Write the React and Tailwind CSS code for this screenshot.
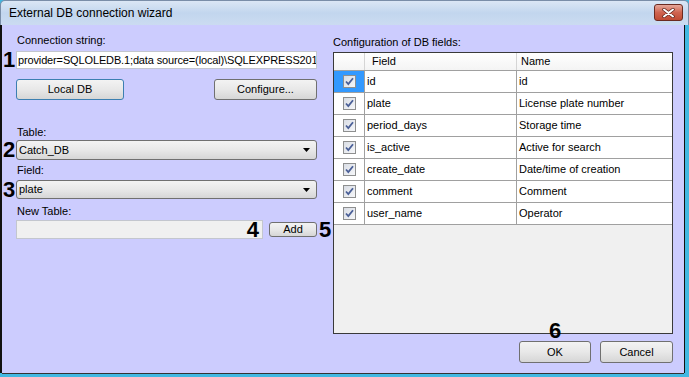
import React from 'react';

const fields = [
  { field: 'id', name: 'id' },
  { field: 'plate', name: 'License plate number' },
  { field: 'period_days', name: 'Storage time' },
  { field: 'is_active', name: 'Active for search' },
  { field: 'create_date', name: 'Date/time of creation' },
  { field: 'comment', name: 'Comment' },
  { field: 'user_name', name: 'Operator' },
];

function Num({ children, className = '' }) {
  return (
    <span className={`font-bold text-[22px] leading-[18px] text-black ${className}`}>{children}</span>
  );
}

function Check() {
  return (
    <svg width="13" height="13" viewBox="0 0 13 13">
      <defs>
        <linearGradient id="cb" x1="0" y1="0" x2="1" y2="1">
          <stop offset="0" stopColor="#d8dce4" />
          <stop offset="1" stopColor="#f7f8fa" />
        </linearGradient>
      </defs>
      <rect x="0.5" y="0.5" width="12" height="12" fill="url(#cb)" stroke="#8e8f8f" />
      <path d="M3 6.5 L5.3 9 L10 3.2" fill="none" stroke="#4a5f97" strokeWidth="1.8" />
    </svg>
  );
}

function Arrow() {
  return (
    <svg width="7" height="4" viewBox="0 0 7 4">
      <path d="M0 0 H7 L3.5 4 Z" fill="#000" />
    </svg>
  );
}

const btn =
  'flex items-center justify-center rounded-[3px] border bg-gradient-to-b from-[#f3f3f3] via-[#e8e8e8] to-[#d6d6d6] text-[11px] text-black';

export default function App() {
  return (
    <div className="w-[689px] h-[377px] flex flex-col bg-[#41b8e2] font-['Liberation_Sans',Arial,sans-serif] overflow-hidden">
      {/* title bar */}
      <div className="h-[25px] flex items-center justify-between pl-[8px] pr-[5px] rounded-t-[5px] border border-b-0 border-[#7a8ea8] bg-gradient-to-b from-[#dbe7f5] via-[#c2d6ee] to-[#cbdbf1]">
        <span className="text-[12px] text-black">External DB connection wizard</span>
        <div className="w-[29px] h-[17px] mb-[1px] rounded-[3px] border border-[#6b2a20] bg-gradient-to-b from-[#e6a79a] via-[#cf6450] to-[#c04a33] flex items-center justify-center">
          <svg width="13" height="10" viewBox="0 0 13 10">
            <path d="M2 1.5 L11 8.5 M11 1.5 L2 8.5" stroke="#5a2018" strokeWidth="3.4" strokeLinecap="round" />
            <path d="M2 1.5 L11 8.5 M11 1.5 L2 8.5" stroke="#fff" strokeWidth="2" strokeLinecap="round" />
          </svg>
        </div>
      </div>

      <div className="flex-1 flex min-h-0">
        <div className="w-[2px] bg-[#111]" />
        <div className="flex-1 flex bg-[#ccccfe]">
          {/* left column */}
          <div className="w-[331px] flex flex-col pt-[9px] pl-px">
            <div className="ml-[14px] text-[11px] leading-[12px]">Connection string:</div>
            <div className="mt-[5px] flex items-center">
              <Num className="w-[13px]">1</Num>
              <div className="w-[301px] h-[18px] bg-white border border-[#c3c6ce] pl-[1px] text-[11px] leading-[16px] tracking-[-0.14px] whitespace-nowrap overflow-hidden">
                provider=SQLOLEDB.1;data source=(local)\SQLEXPRESS201
              </div>
            </div>
            <div className="mt-[10px] ml-[13px] w-[301px] flex justify-between">
              <div className={`${btn} w-[108px] h-[21px] border-[#3c7fb1]`}>Local DB</div>
              <div className={`${btn} w-[103px] h-[21px] border-[#707070]`}>Configure...</div>
            </div>

            <div className="mt-[26px] ml-[14px] text-[11px] leading-[12px]">Table:</div>
            <div className="mt-[2px] flex items-center">
              <Num className="w-[13px]">2</Num>
              <div className={`${btn} w-[301px] h-[20px] border-[#707070] !justify-between pl-[2px] pr-[6px]`}>
                <span>Catch_DB</span>
                <Arrow />
              </div>
            </div>

            <div className="mt-[4px] ml-[14px] text-[11px] leading-[12px]">Field:</div>
            <div className="mt-[4px] flex items-center">
              <Num className="w-[13px]">3</Num>
              <div className={`${btn} w-[301px] h-[19px] border-[#707070] !justify-between pl-[2px] pr-[6px]`}>
                <span>plate</span>
                <Arrow />
              </div>
            </div>

            <div className="mt-[6px] ml-[14px] text-[11px] leading-[12px]">New Table:</div>
            <div className="mt-[3px] ml-[13px] flex items-center">
              <div className="w-[247px] h-[19px] bg-[#f0f0f0] border border-[#c3c6ce] flex items-center justify-end pr-[3px]">
                <Num>4</Num>
              </div>
              <div className={`${btn} ml-[6px] w-[48px] h-[15px] border-[#707070]`}>Add</div>
              <Num className="ml-[2px]">5</Num>
            </div>
          </div>

          {/* right column */}
          <div className="w-[340px] flex flex-col pt-[11px]">
            <div className="text-[11px] leading-[12px]">Configuration of DB fields:</div>
            <div className="mt-[4px] h-[282px] border border-[#3a3a3a] bg-[#f0f0f0] flex flex-col">
              <div className="grid grid-cols-[31px_152px_1fr] h-[18px] bg-gradient-to-b from-white to-[#f4f4f4] border-b border-[#a0a0a0] text-[11px] leading-[17px]">
                <div className="border-r border-[#d5d5d5]" />
                <div className="border-r border-[#d5d5d5] pl-[7px]">Field</div>
                <div className="pl-[4px]">Name</div>
              </div>
              {fields.map((r, i) => (
                <div key={r.field} className="grid grid-cols-[31px_152px_1fr] h-[22px] bg-white border-b border-[#a0a0a0] text-[11px]">
                  <div className={`border-r border-[#a0a0a0] flex items-center justify-center ${i === 0 ? 'bg-[#3399ff]' : ''}`}>
                    <Check />
                  </div>
                  <div className="border-r border-[#a0a0a0] pl-[2px] flex items-center">{r.field}</div>
                  <div className="pl-[2px] flex items-center">{r.name}</div>
                </div>
              ))}
            </div>
            <div className="mt-[7px] flex justify-end gap-[9px]">
              <div className="relative">
                <Num className="absolute bottom-full mb-[1px] left-1/2 -translate-x-1/2">6</Num>
                <div className={`${btn} w-[72px] h-[22px] border-[#707070]`}>OK</div>
              </div>
              <div className={`${btn} w-[73px] h-[22px] border-[#707070]`}>Cancel</div>
            </div>
          </div>
        </div>
        <div className="w-[1px] bg-[#111]" />
        <div className="w-[4px] bg-[#41b8e2]" />
      </div>
      <div className="h-[1px] bg-[#333] ml-[2px] mr-[5px]" />
      <div className="h-[3px]" />
    </div>
  );
}
